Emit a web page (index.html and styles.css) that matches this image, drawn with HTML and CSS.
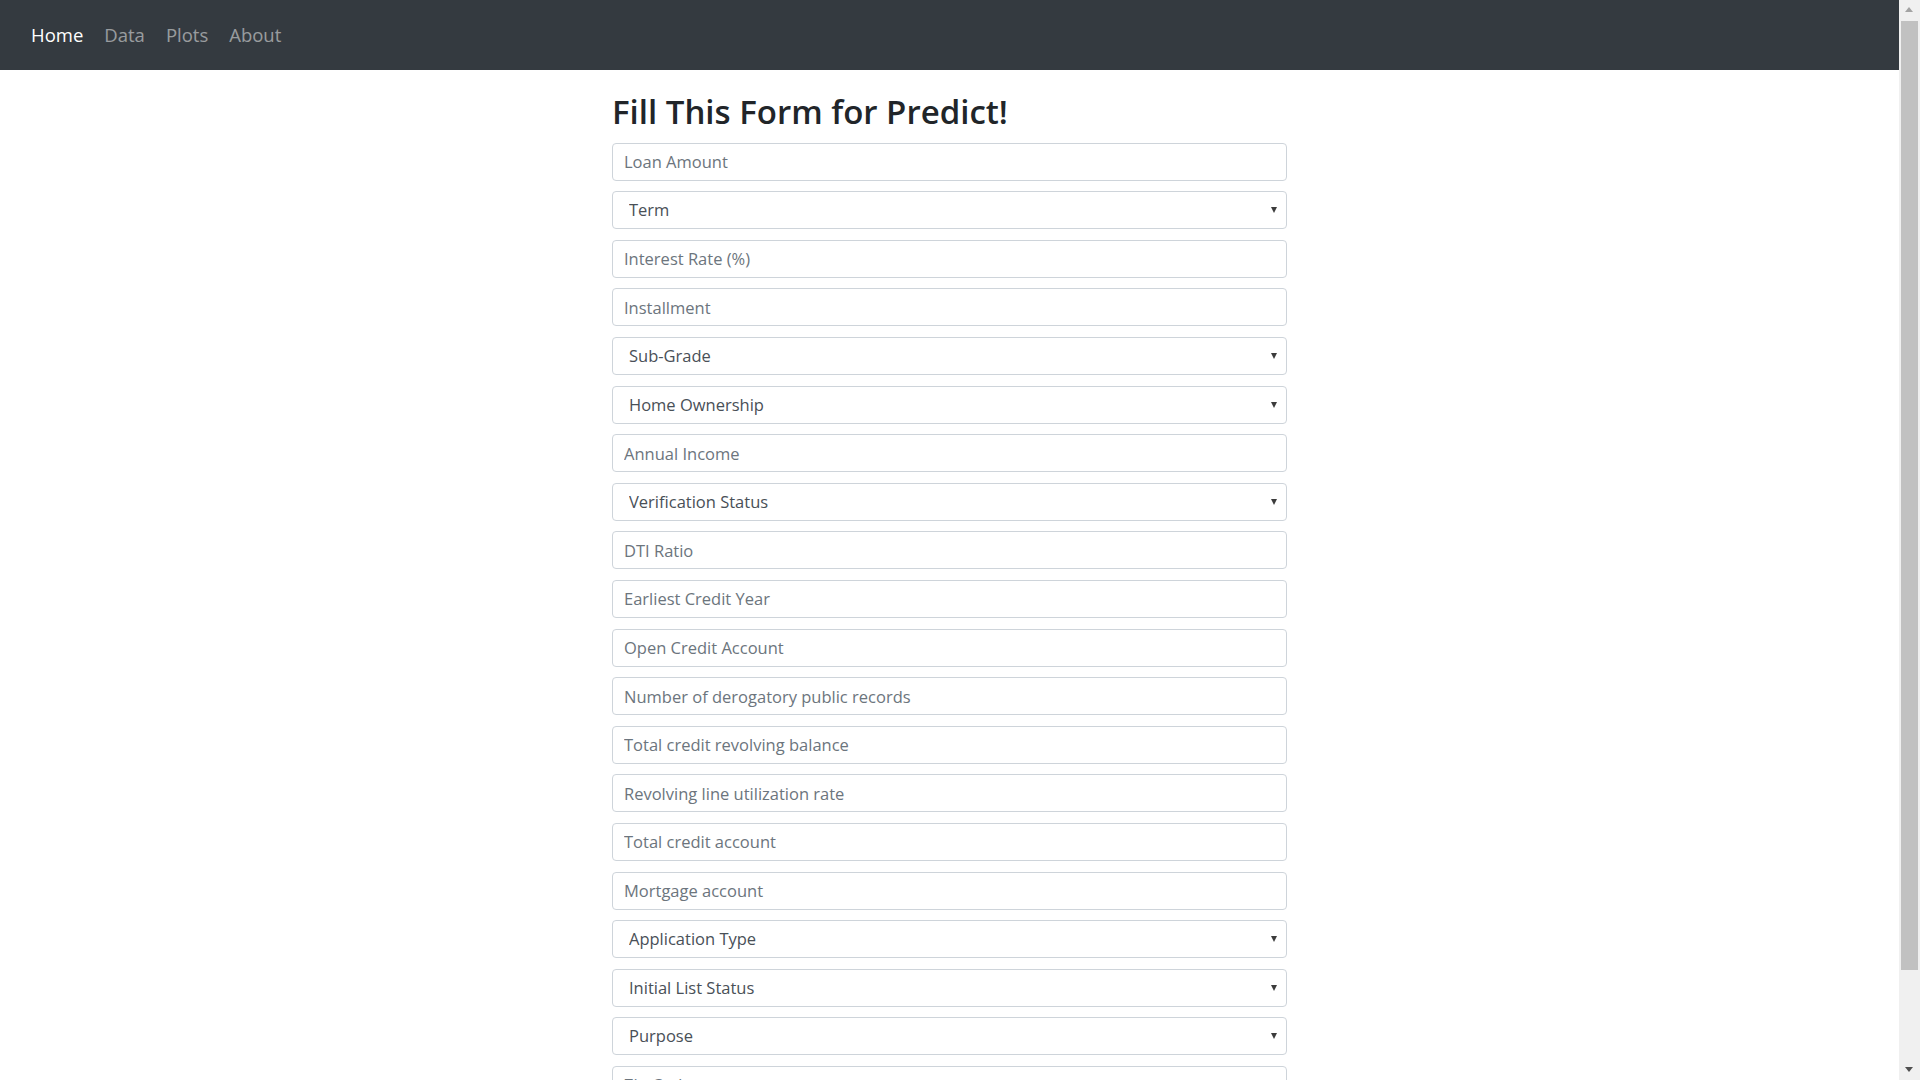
FILE: index.html
```html
<!DOCTYPE html>
<html lang="en">
<head>
<meta charset="utf-8">
<title>Loan Prediction</title>
<link rel="stylesheet" href="styles.css">
</head>
<body>
<nav class="navbar">
  <a class="nav-link active" href="#">Home</a>
  <a class="nav-link" href="#">Data</a>
  <a class="nav-link" href="#">Plots</a>
  <a class="nav-link" href="#">About</a>
</nav>
<main class="main">
  <h1 class="title">Fill This Form for Predict!</h1>
  <form class="form">
    <input class="field" type="text" placeholder="Loan Amount">
    <div class="select-wrap"><select class="field select"><option>Term</option></select></div>
    <input class="field" type="text" placeholder="Interest Rate (%)">
    <input class="field" type="text" placeholder="Installment">
    <div class="select-wrap"><select class="field select"><option>Sub-Grade</option></select></div>
    <div class="select-wrap"><select class="field select"><option>Home Ownership</option></select></div>
    <input class="field" type="text" placeholder="Annual Income">
    <div class="select-wrap"><select class="field select"><option>Verification Status</option></select></div>
    <input class="field" type="text" placeholder="DTI Ratio">
    <input class="field" type="text" placeholder="Earliest Credit Year">
    <input class="field" type="text" placeholder="Open Credit Account">
    <input class="field" type="text" placeholder="Number of derogatory public records">
    <input class="field" type="text" placeholder="Total credit revolving balance">
    <input class="field" type="text" placeholder="Revolving line utilization rate">
    <input class="field" type="text" placeholder="Total credit account">
    <input class="field" type="text" placeholder="Mortgage account">
    <div class="select-wrap"><select class="field select"><option>Application Type</option></select></div>
    <div class="select-wrap"><select class="field select"><option>Initial List Status</option></select></div>
    <div class="select-wrap"><select class="field select"><option>Purpose</option></select></div>
    <input class="field" type="text" placeholder="Zip Code">
    <button class="btn" type="button">Predict</button>
  </form>
</main>
<div class="scrollbar" aria-hidden="true">
  <div class="sb-arrow sb-up"></div>
  <div class="sb-track"><div class="sb-thumb"></div></div>
  <div class="sb-arrow sb-down"></div>
</div>
</body>
</html>
```
FILE: styles.css
```css
body {
  margin: 0;
  padding-right: 21px;
  font-family: "Open Sans", "Noto Sans", Arial, sans-serif;
  font-size: 16px;
  line-height: 1.5;
  color: #212529;
  background: #fff;
}

/* emulated window scrollbar */
.scrollbar {
  position: fixed;
  top: 0;
  right: 0;
  width: 21px;
  height: 100vh;
  background: #f0f0f0;
  display: flex;
  flex-direction: column;
}
.sb-arrow {
  height: 21px;
  position: relative;
  flex: none;
}
.sb-arrow::after {
  content: "";
  position: absolute;
  left: 6px;
  border-left: 4.5px solid transparent;
  border-right: 4.5px solid transparent;
}
.sb-up::after {
  top: 7px;
  border-bottom: 5px solid #a3a3a3;
}
.sb-down::after {
  top: 8px;
  border-top: 5px solid #505050;
}
.sb-track {
  flex: 1;
  padding: 0 2px;
  display: flex;
}
.sb-thumb {
  width: 17px;
  height: 949px;
  background: #c1c1c1;
}

.navbar {
  height: 70px;
  background: #343a40;
  display: flex;
  align-items: center;
  padding: 0 0 0 31px;
  gap: 21px;
  box-sizing: border-box;
}
.nav-link {
  font-size: 18.5px;
  color: rgba(255, 255, 255, 0.5);
  text-decoration: none;
  line-height: 1.5;
}
.nav-link.active {
  color: #fff;
}

.main {
  width: 675px;
  margin-left: calc(50% - 337.5px);
  padding-top: 22px;
  padding-bottom: 30px;
}
.title {
  margin: 0 0 11px;
  font-size: 33px;
  font-weight: 600;
  line-height: 1.2;
  color: #212529;
}
.form {
  display: flex;
  flex-direction: column;
}
.field {
  display: block;
  box-sizing: border-box;
  width: 100%;
  height: 38px;
  margin: 0 0 10.6px;
  padding: 6px 11px;
  font-family: inherit;
  font-size: 16.5px;
  line-height: 1.5;
  color: #495057;
  background: #fff;
  border: 1px solid #ced4da;
  border-radius: 4px;
  outline: none;
}
.field::placeholder {
  color: #6c757d;
  opacity: 1;
}
.select-wrap {
  position: relative;
}
.select {
  -webkit-appearance: none;
  appearance: none;
  padding-left: 16px;
  color: #495057;
}
.select-wrap::after {
  content: "";
  position: absolute;
  right: 10px;
  top: 16px;
  border-left: 3.5px solid transparent;
  border-right: 3.5px solid transparent;
  border-top: 6px solid #3c3c3c;
}
.btn {
  align-self: flex-start;
  height: 38px;
  padding: 6px 12px;
  font-family: inherit;
  font-size: 16px;
  color: #fff;
  background: #007bff;
  border: 1px solid #007bff;
  border-radius: 4px;
}
```
